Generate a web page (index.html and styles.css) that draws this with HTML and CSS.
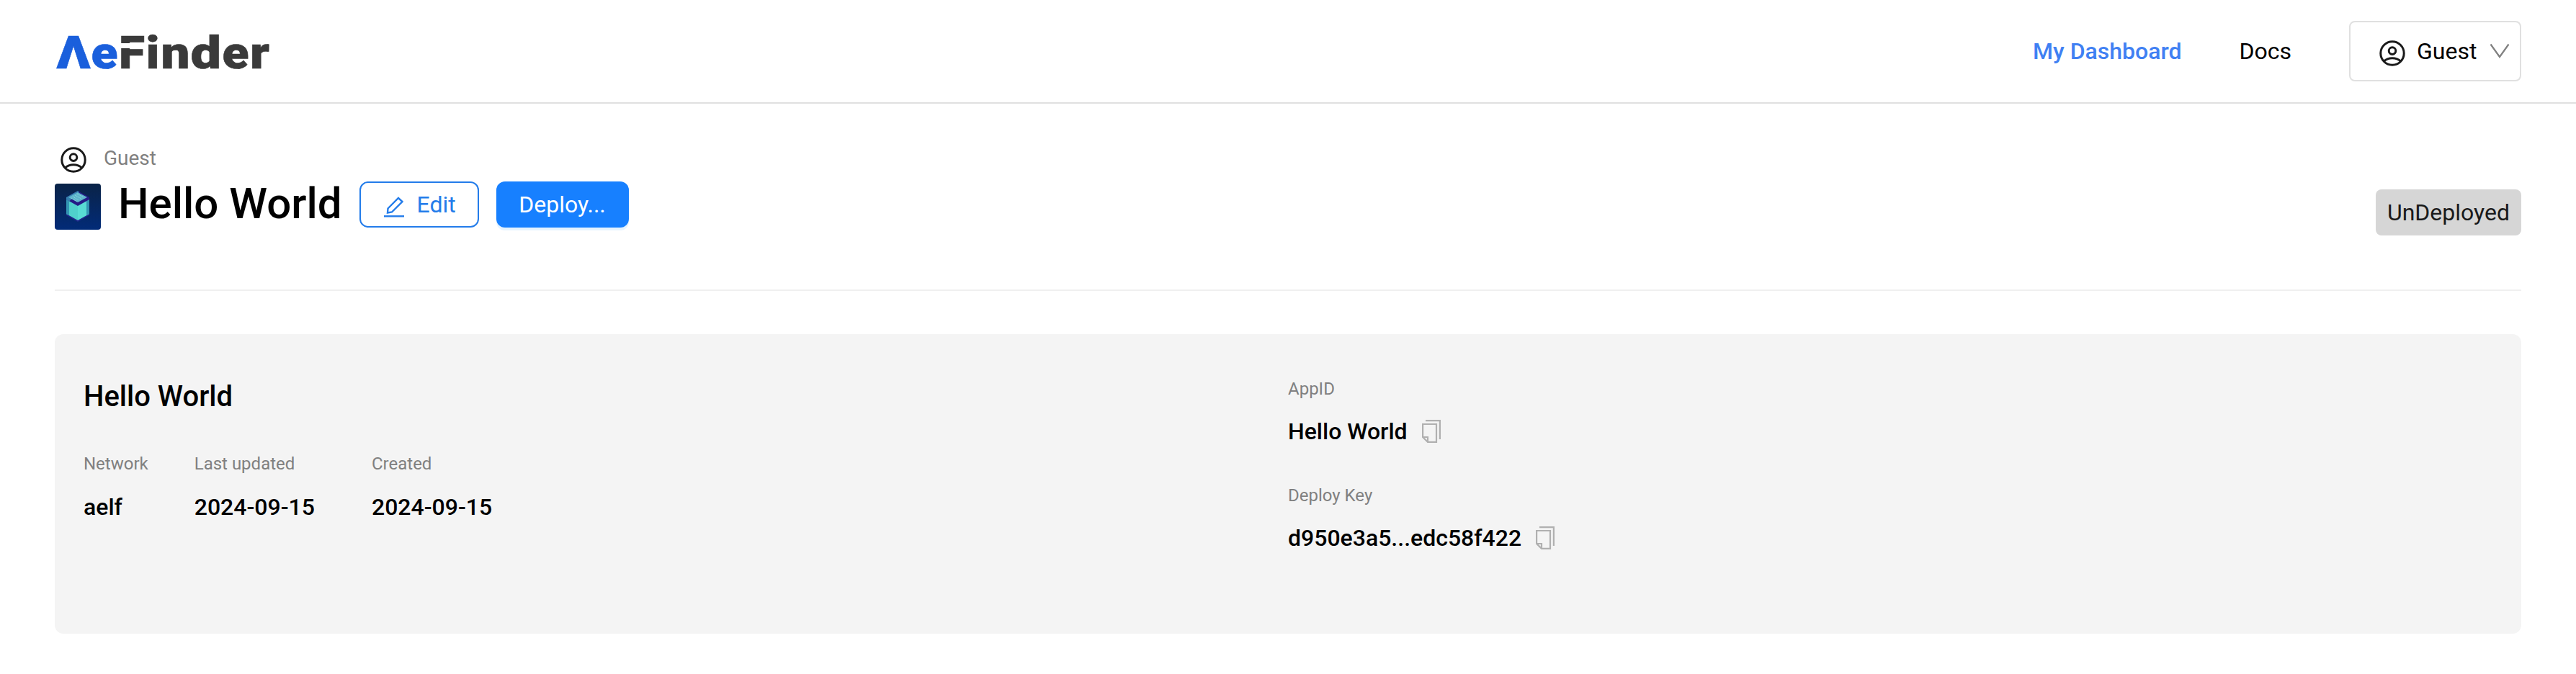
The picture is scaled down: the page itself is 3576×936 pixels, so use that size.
FILE: index.html
```html
<!DOCTYPE html>
<html lang="en">
<head>
<meta charset="utf-8">
<title>AeFinder</title>
<link rel="stylesheet" href="styles.css">
</head>
<body>
<svg width="0" height="0" class="defs" aria-hidden="true">
  <symbol id="user" viewBox="0 0 36 36">
    <g fill="none" stroke="#1a1a1a" stroke-width="3">
      <circle cx="18" cy="18" r="16.2"/>
      <circle cx="18" cy="14.6" r="4.8"/>
      <path d="M6.2 29C12.5 23.2 23.5 23.2 29.8 29"/>
    </g>
  </symbol>
  <symbol id="copy" viewBox="0 0 26 32">
    <g fill="none" stroke="#b0b0b0" stroke-width="2.200">
      <path d="M5 1.100H24.900V27"/>
      <path d="M1.100 6H20V30.900H8L1.100 24ZM1.100 24H8V30.900"/>
    </g>
  </symbol>
</svg>
<header class="header">
  <svg class="logo" width="320" height="100" viewBox="0 0 320 100" role="img" aria-label="AeFinder">
    <text class="blue" x="2.500" y="74" textLength="47" lengthAdjust="spacingAndGlyphs">Λ</text>
    <text class="blue" x="50.500" y="74" textLength="37" lengthAdjust="spacingAndGlyphs">e</text>
    <text x="89" y="74" textLength="36" lengthAdjust="spacingAndGlyphs">F</text>
    <text x="126.500" y="74" textLength="19" lengthAdjust="spacingAndGlyphs">i</text>
    <text x="147.500" y="74" textLength="40" lengthAdjust="spacingAndGlyphs">n</text>
    <text x="188.500" y="74" textLength="42.500" lengthAdjust="spacingAndGlyphs">d</text>
    <text x="232.500" y="74" textLength="37" lengthAdjust="spacingAndGlyphs">e</text>
    <text x="271" y="74" textLength="27" lengthAdjust="spacingAndGlyphs">r</text>
    <rect x="90" y="39" width="36" height="7" fill="#fff"/>
  </svg>
  <nav class="nav">
    <a class="active">My Dashboard</a>
    <a>Docs</a>
    <div class="account">
      <svg width="36" height="36"><use href="#user"/></svg>
      <span>Guest</span>
      <svg class="chevron" width="28" height="22" viewBox="0 0 28 22"><path d="M1.5 1.5L14 19L26.500 1.500" fill="none" stroke="#808080" stroke-width="2.200"/></svg>
    </div>
  </nav>
</header>
<main class="main">
  <div class="owner"><svg width="36" height="36"><use href="#user"/></svg><span>Guest</span></div>
  <div class="title-row">
    <svg class="app-icon" width="64" height="64" viewBox="0 0 64 64">
      <defs>
        <linearGradient id="bg" x2="0" y2="1"><stop stop-color="#0a2347"/><stop offset="1" stop-color="#022b78"/></linearGradient>
      </defs>
      <rect width="64" height="64" rx="4" fill="url(#bg)"/>
      <path d="M16 44L32 53L48 44V40H16Z" fill="#20268c"/>
      <path d="M16 21L32 30V51L16 42Z" fill="#4fd0cc"/>
      <path d="M48 21L32 30V51L48 42Z" fill="#58dcd4"/>
      <path d="M16 21L20 23V44L16 42ZM48 21L44 23V44L48 42Z" fill="#3395b4"/>
      <path d="M32 10L48 19V22L32 31L16 22V19Z" fill="#241b86"/>
      <path d="M32 10L16 19V22L20 24.500L34 12Z" fill="#357fae"/>
      <path d="M32 12L45 19L32 26L19 19Z" fill="#5eb5cc"/>
      <path d="M25 18L33 23M28 16L37 21M31 14L40 19M23 20L31 25" stroke="#8bdce0" stroke-width="1" stroke-dasharray="1.500 1"/>
    </svg>
    <h1>Hello World</h1>
    <button class="btn edit">
      <svg width="28" height="30" viewBox="0 0 28 30" fill="none" stroke="#237cea" stroke-width="2.400"><path d="M5.500 17.500L20 3L25.500 8L11 22.500L5 23.500Z"/><path d="M0 28.300H28"/></svg>
      <span>Edit</span>
    </button>
    <button class="btn deploy">Deploy...</button>
    <span class="status">UnDeployed</span>
  </div>
  <section class="card">
    <div class="left">
      <h2>Hello World</h2>
      <dl class="facts">
        <div><dt>Network</dt><dd>aelf</dd></div>
        <div><dt>Last updated</dt><dd>2024-09-15</dd></div>
        <div class="created"><dt>Created</dt><dd>2024-09-15</dd></div>
      </dl>
    </div>
    <dl class="right">
      <div><dt>AppID</dt><dd>Hello World<svg width="26" height="32"><use href="#copy"/></svg></dd></div>
      <div><dt>Deploy Key</dt><dd>d950e3a5...edc58f422<svg width="26" height="32"><use href="#copy"/></svg></dd></div>
    </dl>
  </section>
</main>
</body>
</html>
```
FILE: styles.css
```css
* { box-sizing: border-box; }
body, h1, h2, dl, dd { margin: 0; }
body { font-family: Roboto, sans-serif; font-size: 32px; color: #000; background: #fff; }
svg { display: block; flex: none; }
.defs { position: absolute; }
.header {
  height: 144px;
  padding: 0 76px;
  border-bottom: 2px solid #e0e0e0;
  display: flex;
  align-items: center;
  justify-content: space-between;
}
.logo text { font-family: Roboto, sans-serif; font-weight: 900; font-size: 63px; fill: #3a3a3a; stroke: #3a3a3a; stroke-width: 0.6px; }
.logo .blue { fill: #1a5fdc; stroke: #1a5fdc; }
.nav { display: flex; align-items: center; gap: 80px; line-height: 40px; }
.nav .active { color: #3f80f3; font-weight: 500; }
.account {
  width: 239px;
  height: 84px;
  padding-left: 40px;
  border: 2px solid #e0e0e0;
  border-radius: 8px;
  display: flex;
  align-items: center;
}
.account span { margin: 0 18px 0 16px; }
.account > svg:first-child { margin-top: 5px; }
.main { padding: 56px 76px 0; }
.owner { display: flex; align-items: center; height: 44px; padding-left: 8px; gap: 24px; font-size: 28px; color: #808080; }
.owner span { margin-top: -6px; }
.title-row {
  display: flex;
  align-items: flex-start;
  height: 160px;
  padding-top: 8px;
  border-bottom: 2px solid #f0f0f0;
}
.app-icon { margin-top: 3px; }
h1 { margin: -9px 24px 0; font-size: 60px; font-weight: 500; line-height: 79px; }
.btn { height: 64px; border-radius: 12px; font: inherit; display: flex; align-items: center; justify-content: center; padding: 0; line-height: 40px; }
.edit { width: 166px; justify-content: flex-start; padding-left: 32px; border: 2px solid #237cea; background: #fff; color: #237cea; gap: 18px; margin-right: 24px; }
.edit svg { margin-top: 5px; }
.deploy { width: 184px; border: 0; background: #1780ff; color: #fff; box-shadow: 0 4px 0 rgba(5, 145, 255, 0.1); }
.status { margin: 11px 0 0 auto; width: 202px; line-height: 64px; text-align: center; border-radius: 8px; background: #d6d6d6; color: #1a1a1a; }
.card {
  margin-top: 60px;
  height: 416px;
  padding: 56px 40px;
  border-radius: 12px;
  background: #f4f4f4;
  display: grid;
  grid-template-columns: 1fr 1fr;
}
h2 { margin-top: 7px; font-size: 40px; font-weight: 500; line-height: 48px; }
.facts { display: flex; gap: 64px; margin-top: 53px; }
.created { margin-left: 15px; }
dt { font-size: 24px; line-height: 32px; color: #808080; }
dd { font-weight: 500; line-height: 40px; margin-top: 24px; display: flex; align-items: center; }
.right { display: grid; gap: 53px; align-content: start; padding-top: 4px; }
.right dd { margin-top: 23px; }
.right dd svg { margin-left: 20px; }
```
